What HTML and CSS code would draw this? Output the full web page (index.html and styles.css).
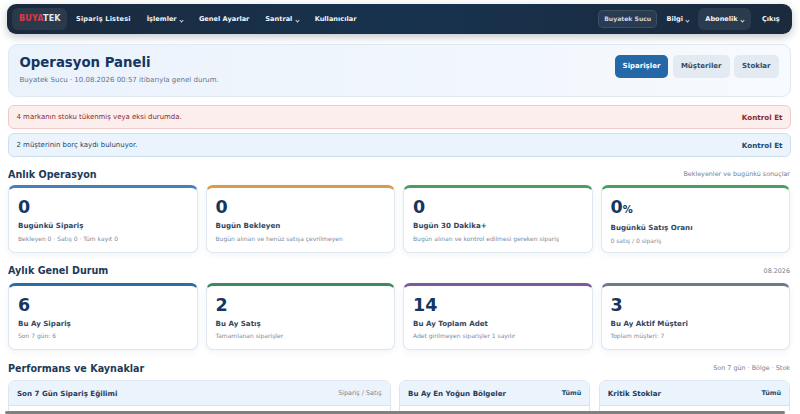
FILE: index.html
```html
<!DOCTYPE html>
<html lang="tr">
<head>
<meta charset="utf-8">
<title>Operasyon Paneli</title>
<link rel="stylesheet" href="styles.css">
</head>
<body>
<div class="page">
  <nav class="nav">
    <a class="brand"><span class="b-red">BUYA</span>TEK</a>
    <a class="nl wide">Sipariş Listesi</a>
    <a class="nl">İşlemler <i class="car"></i></a>
    <a class="nl">Genel Ayarlar</a>
    <a class="nl">Santral <i class="car"></i></a>
    <a class="nl">Kullanıcılar</a>
    <span class="sp"></span>
    <a class="user">Buyatek Sucu</a>
    <a class="nl">Bilgi <i class="car"></i></a>
    <a class="nl active">Abonelik <i class="car"></i></a>
    <a class="nl last">Çıkış</a>
  </nav>
  <header class="hero">
    <div>
      <h1>Operasyon Paneli</h1>
      <p>Buyatek Sucu · 10.08.2026 00:57 itibarıyla genel durum.</p>
    </div>
    <div class="acts">
      <a class="btn pri">Siparişler</a>
      <a class="btn">Müşteriler</a>
      <a class="btn">Stoklar</a>
    </div>
  </header>
  <div class="alert red"><span>4 markanın stoku tükenmiş veya eksi durumda.</span><b>Kontrol Et</b></div>
  <div class="alert blue"><span>2 müşterinin borç kaydı bulunuyor.</span><b>Kontrol Et</b></div>
  <div class="sec first"><h2>Anlık Operasyon</h2><small>Bekleyenler ve bugünkü sonuçlar</small></div>
  <div class="grid">
    <div class="card c-blue"><div class="num">0</div><div class="lab">Bugünkü Sipariş</div><div class="sub">Bekleyen 0 · Satış 0 · Tüm kayıt 0</div></div>
    <div class="card c-orange"><div class="num">0</div><div class="lab">Bugün Bekleyen</div><div class="sub">Bugün alınan ve henüz satışa çevrilmeyen</div></div>
    <div class="card c-green"><div class="num">0</div><div class="lab">Bugün 30 Dakika+</div><div class="sub">Bugün alınan ve kontrol edilmesi gereken sipariş</div></div>
    <div class="card c-green"><div class="num">0<em>%</em></div><div class="lab">Bugünkü Satış Oranı</div><div class="sub">0 satış / 0 sipariş</div></div>
  </div>
  <div class="sec"><h2>Aylık Genel Durum</h2><small>08.2026</small></div>
  <div class="grid">
    <div class="card c-navy"><div class="num">6</div><div class="lab">Bu Ay Sipariş</div><div class="sub">Son 7 gün: 6</div></div>
    <div class="card c-dgreen"><div class="num">2</div><div class="lab">Bu Ay Satış</div><div class="sub">Tamamlanan siparişler</div></div>
    <div class="card c-purple"><div class="num">14</div><div class="lab">Bu Ay Toplam Adet</div><div class="sub">Adet girilmeyen siparişler 1 sayılır</div></div>
    <div class="card c-gray"><div class="num">3</div><div class="lab">Bu Ay Aktif Müşteri</div><div class="sub">Toplam müşteri: 7</div></div>
  </div>
  <div class="sec"><h2>Performans ve Kaynaklar</h2><small>Son 7 gün · Bölge · Stok</small></div>
  <div class="panels">
    <section class="panel"><div class="ph"><b>Son 7 Gün Sipariş Eğilimi</b><small>Sipariş / Satış</small></div></section>
    <section class="panel"><div class="ph"><b>Bu Ay En Yoğun Bölgeler</b><a>Tümü</a></div></section>
    <section class="panel"><div class="ph"><b>Kritik Stoklar</b><a>Tümü</a></div></section>
  </div>
</div>
<div class="hbar"><i></i></div>
</body>
</html>
```
FILE: styles.css
```css
* { box-sizing: border-box; }
html, body { margin: 0; height: 414px; overflow: hidden; background: #fff; }
body { font-family: "DejaVu Sans", sans-serif; color: #17365d; position: relative; }
.page { height: 414px; overflow: hidden; padding: 4px 9.5px 0 7.5px; }
.nav { display: flex; align-items: center; height: 29.5px; margin: 0 -1.2px 0 -1px; padding: 0 5px 0 5.5px; border-radius: 9px; background: linear-gradient(90deg, #1b2a3d, #17324e 50%, #1b2a3d); box-shadow: 0 3px 9px rgba(15,30,50,.25); color: #f1f5f9; }
.brand { font-size: 8px; font-weight: 700; letter-spacing: .2px; padding: 0 7px; height: 22px; line-height: 22px; border-radius: 6px; background: rgba(255,255,255,.07); color: #e2e8f0; margin-right: 2px; width: 55px; }
.b-red { color: #e03a45; }
.nl { font-size: 6.6px; font-weight: 700; padding: 0 7px; height: 22px; line-height: 22px; white-space: nowrap; margin-right: 2px; }
.wide { letter-spacing: .17px; }
.car { display: inline-block; width: 3px; height: 3px; border-right: 1px solid #cbd5e1; border-bottom: 1px solid #cbd5e1; transform: rotate(45deg); vertical-align: -1px; margin-left: 1px; }
.sp { flex: 1; }
.user { font-size: 6.1px; font-weight: 700; color: #cbd5e1; width: 59.5px; height: 18px; line-height: 16px; text-align: center; border: 1px solid rgba(255,255,255,.1); border-radius: 5px; background: rgba(255,255,255,.07); margin-right: 2px; white-space: nowrap; }
.active { background: rgba(255,255,255,.08); border-radius: 6px; margin-right: 4px; }
.last { margin-right: 0; }
.hero { display: flex; justify-content: space-between; align-items: flex-start; height: 53px; margin-top: 10.5px; padding: 9px 11px 0; border: 1px solid #dfe8f3; border-radius: 9px; background: linear-gradient(90deg, #eaf2fc, #f7fafe); }
h1 { margin: 0; font-size: 13.3px; line-height: 18px; font-weight: 700; color: #17365d; }
.hero p { margin: 4px 0 0; font-size: 7px; line-height: 9px; color: #64748b; }
.acts { display: flex; gap: 4.5px; margin-top: 1px; }
.btn { height: 23px; line-height: 23px; padding: 0 8px; border-radius: 5px; background: #e4eaf1; color: #334b66; font-size: 7px; font-weight: 700; }
.pri { background: #2468a8; color: #fff; }
.alert { display: flex; justify-content: space-between; align-items: center; height: 24px; padding: 0 7px 0 8px; border-radius: 6px; font-size: 6.95px; border: 1px solid; margin-bottom: 4px; }
.alert b { font-size: 7.2px; }
.hero + .alert { margin-top: 8px; }
.red { background: #fdeeee; border-color: #f1c9c9; color: #8a2a2e; }
.blue { background: #ebf4fd; border-color: #cbdff0; color: #21486e; }
.sec { display: flex; justify-content: space-between; align-items: center; height: 14px; margin: 11px .5px 5px; }
.sec.first { margin-top: 10px; margin-bottom: 4px; }
h2 { margin: 0; font-size: 9.6px; font-weight: 700; color: #1e3a5a; }
.sec small { font-size: 6.4px; color: #718096; }
.grid { display: grid; grid-template-columns: repeat(4, 1fr); gap: 8px; margin: 0 .5px; }
.card { height: 67.7px; padding: 10px 9px 0; background: #fff; border: 1px solid #dfe7f0; border-top: 3px solid; border-radius: 7px; box-shadow: 0 2px 6px rgba(20,50,90,.06); }
.num { font-size: 17.5px; line-height: 19px; font-weight: 700; color: #17365d; }
.num em { font-style: normal; font-size: 10px; }
.lab { margin-top: 4px; font-size: 7.1px; line-height: 10px; font-weight: 700; color: #33475f; }
.sub { margin-top: 3.5px; font-size: 6px; line-height: 8px; color: #7c8a9c; white-space: nowrap; }
.c-blue { border-top-color: #477fb8; }
.c-orange { border-top-color: #dd9a45; }
.c-green { border-top-color: #4a9d65; }
.c-navy { border-top-color: #2f6ca5; }
.c-dgreen { border-top-color: #3a8a5c; }
.c-purple { border-top-color: #7d5a9e; }
.c-gray { border-top-color: #6c7a89; }
.panels { display: grid; grid-template-columns: 2fr 1fr 1fr; gap: 8.5px; margin: 0 .5px; }
.panel { height: 60px; border: 1px solid #dbe6f1; border-radius: 7px; background: #fff; overflow: hidden; }
.ph { display: flex; justify-content: space-between; align-items: center; height: 25px; padding: 0 8px; background: #ebf3fc; border-bottom: 1px solid #d8e3ef; }
.ph b { font-size: 7.1px; color: #1e3a5a; }
.ph small { font-size: 6.4px; color: #7a8896; }
.ph a { font-size: 6.4px; font-weight: 700; color: #21486e; }
.hbar { position: absolute; left: 0; right: 0; bottom: 0; height: 3px; background: #fff; }
.hbar i { position: absolute; left: 5px; right: 15px; top: 0; bottom: 0; background: #808080; border-radius: 2px; }
```
